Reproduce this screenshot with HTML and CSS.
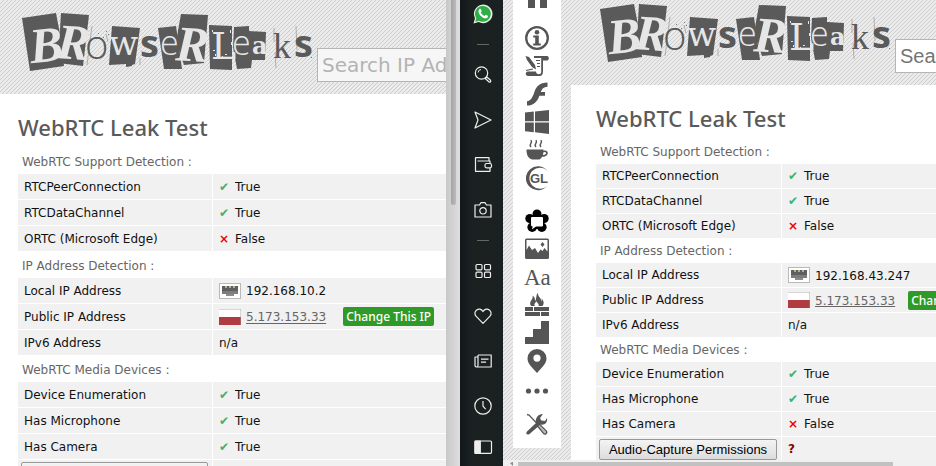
FILE: index.html
```html
<!DOCTYPE html>
<html lang="en">
<head>
<meta charset="utf-8">
<title>WebRTC Leak Test</title>
<link rel="stylesheet" href="styles.css">
</head>
<body>
<svg class="defs" width="0" height="0" aria-hidden="true">
  <defs>
    <symbol id="logo" viewBox="0 0 292 62">
      <g fill="#5a5a5a">
        <path d="M0 6 34 1 38 22 42 54 8 59Z"/>
        <path d="M39 1 67 3 61 54 36 51Z"/>
        <path d="M90 14 118 16 113 52 110 53 110 54 104 55 104 52 87 53Z"/>
        <path d="M136 16 154 14 160 57 142 57Z"/>
        <path d="M159 2 186 3 182 51 162 53 154 30Z"/>
        <path d="M187 13 210 14 210 58 188 57Z"/>
        <path d="M212 15 227 14 227 19 244 20 243 48 230 48 229 56 215 57 211 35Z"/>
      </g>
      <g stroke="#8a8a8a" stroke-width="0.6" fill="none">
        <path d="M70 14 65 53M84 22 86 30M118 46v7M252 16v14M253 40l1 16M274 14l1 24"/>
      </g>
      <g fill="#777"><path d="M76 21h1v1h-1zM84 19h1v1h-1zM86 22h1v1h-1zM81 25h1v1h-1zM289 45h1v1h-1z"/></g>
      <g fill="#e6e6e6">
        <path d="M191 38h2v1h-2zM193 42h1v2h-1zM203 42h2v1h-2zM206 46h2v1h-2zM190 18h1v2h-1zM208 18h1v3h-1zM209 30h1v3h-1zM200 44h1v1h-1z"/>
        <text class="lg-gothic" x="7" y="50" transform="rotate(-6 20 30)">B</text>
        <text class="lg-gothic" x="35" y="47" transform="rotate(4 48 30)">R</text>
        <text class="lg-type" x="87" y="43">w</text>
        <text class="lg-light" x="138" y="43">e</text>
        <text class="lg-gothic" x="154" y="49" transform="rotate(3 170 30)">R</text>
        <text class="lg-slab" x="189" y="47">L</text>
        <text class="lg-light" x="210" y="43">e</text>
        <text class="lg-a" x="230" y="42">a</text>
      </g>
      <g fill="#5a5a5a">
        <text class="lg-round" x="63" y="47">o</text>
        <text class="lg-bold" x="118" y="45">s</text>
        <text class="lg-k" x="251" y="46">k</text>
        <text class="lg-bold" x="272" y="45">s</text>
      </g>
    </symbol>
    <symbol id="lan" viewBox="0 0 22 16">
      <rect x=".5" y=".5" width="21" height="15" fill="#fff" stroke="#b9b9b9"/>
      <path d="M3 3h16v5H3z" fill="#5f5f5f"/>
      <path d="M3 8h16v3H3z" fill="#7d7d7d"/>
      <path d="M7 11h8v2H7z" fill="#8c8c8c"/>
      <path d="M6 3h2v2H6zM10 3h2v2h-2zM14 3h2v2h-2z" fill="#b5ae90"/>
    </symbol>
    <symbol id="flag" viewBox="0 0 22 16">
      <path d="M0 0h22v8H0z" fill="#fff"/>
      <path d="M0 8h22v8H0z" fill="#b03c42"/>
      <path d="M0 .5h22M21.500 0v16" fill="none" stroke="#999" stroke-opacity=".4"/>
    </symbol>
  </defs>
</svg>

<div class="desk">
  <section class="page page-a" aria-label="First window">
    <header class="masthead">
      <svg class="logo" role="img" aria-label="BrowserLeaks"><use href="#logo"/></svg>
      <input class="search" type="text" aria-label="Search IP Address" placeholder="Search IP Address">
    </header>
    <main class="content">
      <h1>WebRTC Leak Test</h1>
      <table>
        <colgroup><col class="name"><col></colgroup>
        <tr class="group"><th colspan="2">WebRTC Support Detection :</th></tr>
        <tr><td>RTCPeerConnection</td><td><i class="yes">✔</i>True</td></tr>
        <tr><td>RTCDataChannel</td><td><i class="yes">✔</i>True</td></tr>
        <tr><td>ORTC (Microsoft Edge)</td><td><i class="no">×</i>False</td></tr>
        <tr class="group"><th colspan="2">IP Address Detection :</th></tr>
        <tr><td>Local IP Address</td><td><svg class="mark"><use href="#lan"/></svg><span class="ip">192.168.10.2</span></td></tr>
        <tr><td>Public IP Address</td><td><svg class="mark"><use href="#flag"/></svg><a class="ip" href="#">5.173.153.33</a><button class="change" type="button">Change This IP</button></td></tr>
        <tr><td>IPv6 Address</td><td>n/a</td></tr>
        <tr class="group"><th colspan="2">WebRTC Media Devices :</th></tr>
        <tr><td>Device Enumeration</td><td><i class="yes">✔</i>True</td></tr>
        <tr><td>Has Microphone</td><td><i class="yes">✔</i>True</td></tr>
        <tr><td>Has Camera</td><td><i class="yes">✔</i>True</td></tr>
        <tr><td class="action"><button class="permit" type="button" aria-label="Audio-Capture Permissions"></button></td><td></td></tr>
      </table>
    </main>
  </section>

  <div class="scroll-y"><div class="thumb-y"></div></div>

  <nav class="dock" aria-label="Browser sidebar">
    <a href="#" aria-label="WhatsApp"><svg width="20" height="20" viewBox="0 0 20 20"><path d="M.5 19.500 2 14.300A9.300 9.300 0 1 1 5.600 18Z" fill="#e9eee9"/><path d="M2.300 17.700 3.300 14.200A7.900 7.900 0 1 1 6 16.700Z" fill="#2fae48"/><path d="M6.300 5.200c.8-.7 1.400-.5 1.700.2l.6 1.500c.2.600-.7 1.200-.8 1.600.8 1.700 2 2.700 3.600 3.400.500-.1 1-1.300 1.600-1.100l1.700.9c.6.300.3 1.600-.4 2.100-1.700 1.200-4 .2-5.900-1.400C6.400 10.700 4.400 7.500 6.300 5.200Z" fill="#fff"/></svg></a>
    <span class="rule"></span>
    <a href="#" aria-label="Search"><svg class="line" width="20" height="20" viewBox="0 0 20 20"><circle cx="8.500" cy="8" r="6.200"/><path d="M5 7.500A3.500 3.500 0 0 1 8 4.500" stroke-width="1"/><path d="m12.200 13.500 1.600-1.500 3.500 3c1.300 1.400-.3 2.800-1.500 1.700Z"/></svg></a>
    <a href="#" aria-label="Flow"><svg class="line" width="20" height="20" viewBox="0 0 20 20"><path d="M2 2 18 10 2 18 5 10Z"/></svg></a>
    <a href="#" aria-label="Wallet"><svg class="line" width="20" height="20" viewBox="0 0 20 20"><path d="M16 6V2.700H2.500V16.300H17V13M17 8.500V6H4.500"/><rect x="12" y="8.500" width="6.500" height="4.300" rx="1.500"/></svg></a>
    <a href="#" aria-label="Snapshot"><svg class="line" width="20" height="20" viewBox="0 0 20 20"><path d="M2 5h4.500l1.400-2.300h4.200L13.500 5H18v12H2Z"/><circle cx="10" cy="10.800" r="3.200"/></svg></a>
    <span class="rule"></span>
    <a href="#" aria-label="Speed Dial"><svg class="line" width="20" height="20" viewBox="0 0 20 20"><rect x="3" y="3.500" width="6" height="5.300" rx="1"/><rect x="11.500" y="3.500" width="6" height="5.300" rx="1"/><rect x="3" y="11.200" width="6" height="5.300" rx="1"/><rect x="11.500" y="11.200" width="6" height="5.300" rx="1"/></svg></a>
    <a href="#" aria-label="Bookmarks"><svg class="line" width="20" height="20" viewBox="0 0 20 20"><path d="M10 17.300 3 10.200C-.8 5.500 6.300-.3 10 5.500 13.700-.3 20.800 5.500 17 10.200Z"/></svg></a>
    <a href="#" aria-label="News"><svg class="line" width="20" height="20" viewBox="0 0 20 20"><path d="M5 4h13.200v12H3.300A1.500 1.500 0 0 1 2 14.500V6h3M5 4v10.500A1.500 1.500 0 0 1 3.500 16M8 8.200h7.500M8 11.200h5"/></svg></a>
    <a href="#" aria-label="History"><svg class="line" width="20" height="20" viewBox="0 0 20 20"><circle cx="10" cy="10" r="8.200"/><path d="M10 5v5.200l2.600 2.900"/></svg></a>
    <a href="#" aria-label="Panels" class="last"><svg class="line" width="20" height="20" viewBox="0 0 20 20"><rect x="2" y="4" width="16.500" height="12.300" rx="1"/><path d="M2 4h5.300v12.300H2z" fill="#eee"/></svg></a>
  </nav>

  <section class="page page-b" aria-label="Second window">
    <div class="viewport">
      <nav class="tools" aria-label="Tests">
        <a href="#" aria-label="Home" class="t-home"><svg viewBox="0 0 24 24"><path d="M3 0h7v22H3zM15 0h7v22h-7z"/></svg></a>
        <a href="#" aria-label="IP info"><svg viewBox="0 0 24 24"><circle cx="12" cy="12" r="10.800" fill="none" stroke="#555" stroke-width="2.300"/><circle cx="12" cy="6.300" r="2.300"/><path d="M8.200 9.500h5.600v8h2v2H8.200v-2h2v-6h-2z"/></svg></a>
        <a href="#" aria-label="JavaScript"><svg viewBox="0 0 24 24"><path d="M9 2h13c2.500 0 2.500 4.500 0 4.500h-4V17c0 4-1.500 5-3.500 5H3c-3 0-3-4.500 0-4.500h8c0 3.500 5.200 3.500 5.200.5V4H9z"/><path d="M.5 2 4 3l6 8 1 4.500L7 13 2 6z"/><path d="M11 6.500h4M12 9.500h3M12 12.500h3M1 16.500l7-1.500" stroke="#555" stroke-width="1.200"/></svg></a>
        <a href="#" aria-label="Flash"><svg viewBox="0 0 24 24"><path d="M22.500.5v4.300c-4 .2-5.500 2.200-6.700 5.200H20v3.700h-5.600C12.200 20 8.500 23.500 2 23.500v-4.300c4-.4 5.600-4.200 7.200-8.700C11.300 4.200 14.800.5 22.500.5Z"/></svg></a>
        <a href="#" aria-label="Silverlight"><svg viewBox="0 0 24 24"><path d="M0 2.500 8.800 1.600v9.700H0zM10 1.500 24 0v11.300H10zM0 12.600h8.800v9.600L0 21.200zM10 12.600h14V24l-14-1.700z"/></svg></a>
        <a href="#" aria-label="Java"><svg viewBox="0 0 24 24"><path d="M1.500 11.500h17v1.200c6-1.500 5.800 6.700-1.300 6.100-.8 1.300-1.600 2-2.700 2.700H7C2.500 20 1.500 16 1.500 11.500Zm17 2.700-.6 2.800c4.200.1 4.200-3.600.6-2.800Z"/><path d="M6 9c-3-3 2.200-3.500 0-7M11 9c-3-3 2.200-3.500 0-7M16 9c-3-3 2.200-3.500 0-7" fill="none" stroke="#555" stroke-width="1.400"/></svg></a>
        <a href="#" aria-label="WebGL"><svg viewBox="0 0 24 24"><path d="M22.500 5A12 12 0 1 0 22.500 19.500 10.500 10.500 0 1 1 22.500 5Z"/><text class="gl" x="5" y="17">GL</text></svg></a>
        <a href="#" aria-label="WebRTC" class="t-rtc"><svg viewBox="0 0 24 24"><g fill="#000"><circle cx="12" cy="5" r="4.500"/><circle cx="4.800" cy="9.500" r="4.500"/><circle cx="19.200" cy="9.500" r="4.500"/><circle cx="7.200" cy="18.200" r="4.800"/><circle cx="16.800" cy="18.200" r="4.800"/><path d="M5 8h14v12H5z"/></g><path d="M7 8h10q1 0 1 1v7.500q0 1-1 1h-6L6.800 20.500l1-3Q6 17.500 6 16V9q0-1 1-1Z" fill="#fff"/></svg></a>
        <a href="#" aria-label="Canvas"><svg viewBox="0 0 24 24"><path fill-rule="evenodd" d="M1.500 1.500h21A1.500 1.500 0 0 1 24 3v17.500a1.500 1.500 0 0 1-1.500 1.500h-21A1.500 1.500 0 0 1 0 20.500V3a1.500 1.500 0 0 1 1.500-1.500ZM1.500 3v10L4 8.500 7 13l3-2 3 5 2.500-3.500 2 1.500 2-3 3 3.500V3Z"/><path d="m17.500 5 2 2.500-2 2.500-2-2.500z"/></svg></a>
        <a href="#" aria-label="Fonts"><svg viewBox="0 0 24 24"><text class="aa" x="-1" y="20">Aa</text></svg></a>
        <a href="#" aria-label="Firewall"><svg viewBox="0 0 24 24"><path d="M6 13C3 8 9 7 7.500 2.500 10 4 10 6 10 8c2-2 .5-6 3-8-.5 4 4 5 3 8.500 1-1 .8-2 .5-3 3 3 2.500 5.500 1 7.500h-4c1-3-2-3-2-5-1 2-3 3-1.500 5Z"/><path d="M0 14h8v4H0zM9 14h15v4H9zM0 19h15v4H0zM16 19h8v4h-8z"/></svg></a>
        <a href="#" aria-label="Features"><svg viewBox="0 0 24 24"><path d="M16 0h8v23H0v-7h8V8h8z"/></svg></a>
        <a href="#" aria-label="Geolocation"><svg viewBox="0 0 24 24"><path fill-rule="evenodd" d="M12 0a9.500 9.500 0 0 1 9.500 9.500C21.500 15 16 19 12 24 8 19 2.500 15 2.500 9.500A9.500 9.500 0 0 1 12 0Zm0 5.500a3.600 3.600 0 1 0 0 7.200 3.600 3.600 0 0 0 0-7.200Z"/></svg></a>
        <a href="#" aria-label="More" class="t-more"><svg viewBox="0 0 24 24"><circle cx="3.500" cy="12" r="2.600"/><circle cx="12" cy="12" r="2.600"/><circle cx="20.500" cy="12" r="2.600"/></svg></a>
        <a href="#" aria-label="Tools" class="t-tools"><svg viewBox="0 0 24 24"><path d="m2 19.500 9-8.500C10 6 13 2 18 2l-3 4 1.300 2.500L20 9l2-3c1 5-3 7.500-6.500 6.500L4.500 22C2 23.500.2 21.500 2 19.500Z"/><path d="m2 2.500 2 .5 9 9.500" stroke="#555" stroke-width="1.300" fill="none"/><path d="m12.500 14 2-1.700 6.500 6.300c2 2.200-.8 4.500-2.500 2.800Z" fill="#bbb" stroke="#555" stroke-width="1.300"/></svg></a>
      </nav>
      <div class="sheet">
        <header class="masthead">
          <svg class="logo" role="img" aria-label="BrowserLeaks"><use href="#logo"/></svg>
          <input class="search" type="text" aria-label="Search" placeholder="Search IP Address">
        </header>
        <main class="content">
          <h1>WebRTC Leak Test</h1>
          <table>
            <colgroup><col class="name"><col></colgroup>
            <tr class="group"><th colspan="2">WebRTC Support Detection :</th></tr>
            <tr><td>RTCPeerConnection</td><td><i class="yes">✔</i>True</td></tr>
            <tr><td>RTCDataChannel</td><td><i class="yes">✔</i>True</td></tr>
            <tr><td>ORTC (Microsoft Edge)</td><td><i class="no">×</i>False</td></tr>
            <tr class="group"><th colspan="2">IP Address Detection :</th></tr>
            <tr><td>Local IP Address</td><td><svg class="mark"><use href="#lan"/></svg><span class="ip">192.168.43.247</span></td></tr>
            <tr><td>Public IP Address</td><td><svg class="mark"><use href="#flag"/></svg><a class="ip" href="#">5.173.153.33</a><button class="change" type="button">Change This IP</button></td></tr>
            <tr><td>IPv6 Address</td><td>n/a</td></tr>
            <tr class="group"><th colspan="2">WebRTC Media Devices :</th></tr>
            <tr><td>Device Enumeration</td><td><i class="yes">✔</i>True</td></tr>
            <tr><td>Has Microphone</td><td><i class="yes">✔</i>True</td></tr>
            <tr><td>Has Camera</td><td><i class="no">×</i>False</td></tr>
            <tr><td class="action"><button class="permit" type="button">Audio-Capture Permissions</button></td><td><i class="ask">?</i></td></tr>
          </table>
        </main>
      </div>
    </div>
    <div class="scroll-x"><svg class="arrow" viewBox="0 0 8 4"><path d="M7 0v4L4 1z"/></svg><div class="thumb-x"></div></div>
  </section>
</div>
</body>
</html>
```
FILE: styles.css
```css
* { box-sizing: border-box; }

body {
  margin: 0;
  overflow: hidden;
  font: 12px/16px "DejaVu Sans", sans-serif;
  color: #111;
  background: #fff;
}

.defs { display: none; }

.desk {
  display: grid;
  grid-template-columns: minmax(0, 446fr) 14px 43px minmax(0, 433fr);
  height: 100vh;
}

.page {
  display: flex;
  flex-direction: column;
  min-width: 0;
  overflow: hidden;
  background: linear-gradient(135deg, #ebebeb 42%, #cdcdcd 42% 58%, #ebebeb 58%) 0 0 / 4px 4px;
}

.masthead {
  display: flex;
  flex: none;
  gap: 3px;
  overflow: hidden;
}

.logo {
  flex: none;
  width: 292px;
  height: 62px;
}

.lg-gothic { font: italic bold 50px "Liberation Serif", serif; }
.lg-light { font: 300 34px "Open Sans", sans-serif; }
.lg-round { font: 300 40px "Open Sans", sans-serif; }
.lg-type { font: 34px "DejaVu Serif", serif; }
.lg-slab { font: 38px "DejaVu Serif", serif; }
.lg-a { font: bold 24px "DejaVu Serif", serif; }
.lg-k { font: 36px "Liberation Serif", serif; }
.lg-bold { font: bold 38px "Open Sans", sans-serif; }

.search {
  flex: none;
  width: 300px;
  height: 34px;
  padding: 0 4px;
  border: 1px solid #b5b5b5;
  border-radius: 0;
  font: 20px "DejaVu Sans", sans-serif;
  background: #f6f6f6;
}

.search::placeholder { color: #b3b3b3; opacity: 1; }

.content {
  flex: 1;
  overflow: hidden;
  background: #fff;
}

h1 {
  margin: 0;
  font: 500 22px/30px "Noto Sans", sans-serif;
  color: #5a5a5a;
  white-space: nowrap;
}

table {
  width: 100%;
  border-spacing: 0;
  table-layout: fixed;
  white-space: nowrap;
}

th {
  padding: 0 4px;
  text-align: left;
  font-weight: normal;
  color: #666;
}

td {
  padding: 0 6px;
  background: #f1f1f1;
  border-bottom: 1px solid #fff;
}

td:first-child { border-right: 1px solid #fff; }
td.action { padding: 0 3px; }

td i {
  display: inline-block;
  width: 16px;
  font-style: normal;
}

.yes { color: #3cb371; }
.no { color: #e00; font-weight: bold; }
.ask { color: #8b0000; font-weight: bold; }

.mark {
  width: 22px;
  height: 16px;
  margin-right: 5px;
  vertical-align: middle;
}

.ip { vertical-align: middle; }
a.ip { color: #666; text-underline-offset: 2px; }

.change {
  height: 19px;
  margin-left: 13px;
  padding: 0 3px;
  border: 0;
  border-radius: 2px;
  font: 500 12px/19px "Noto Sans", sans-serif;
  color: #fff;
  background: #2f9a27;
  vertical-align: middle;
}

.permit {
  display: block;
  height: 21px;
  width: 178px;
  padding: 0;
  border: 1px solid #999;
  border-radius: 2px;
  font: 13px/17px "Liberation Sans", sans-serif;
  color: #000;
  background: linear-gradient(#f4f4f4, #dcdcdc);
}

/* First window */
.page-a .masthead { height: 94px; padding-left: 22px; }
.page-a .logo { margin-top: 12px; }
.page-a .search { margin-top: 48px; }
.page-a .content { padding: 18px 0 0 18px; }
.page-a h1 { margin-bottom: 6px; }
.page-a .name { width: 195px; }
.page-a tr { height: 26px; }
.page-a th { padding-top: 1px; }
.page-a .change { margin-left: 17px; }
.page-a .permit { width: 187px; }

.scroll-y {
  display: flex;
  justify-content: center;
  background: linear-gradient(90deg, #c8c8c8, #dedede);
}

.thumb-y {
  width: 5px;
  height: 205px;
  border-radius: 0 0 3px 3px;
  background: linear-gradient(90deg, #a4a4a4, #bbb);
}

.dock {
  display: flex;
  flex-direction: column;
  align-items: center;
  gap: 25px;
  padding: 4px 0 0 2px;
  overflow: hidden;
  background: linear-gradient(90deg, #10171a, #1b2021 10px);
}

.dock a { flex: none; height: 20px; }
.dock .last { margin-top: -4px; }
.dock svg { display: block; }
.dock .line { fill: none; stroke: #eee; stroke-width: 1.2; stroke-linejoin: round; }
.dock .rule { flex: none; width: 12px; height: 1px; margin: -5px 0; background: #666; }

/* Second window */
.viewport { display: flex; flex: 1; min-height: 0; padding-left: 10px; }

.tools {
  flex: none;
  align-self: flex-start;
  display: flex;
  flex-direction: column;
  align-items: center;
  gap: 4px;
  width: 48px;
  margin-right: 10px;
  padding-bottom: 12px;
  background: #fff;
}

.tools a { height: 24px; }
.tools svg { display: block; width: 24px; height: 24px; overflow: visible; fill: #555; }
.tools .t-home { height: 22px; margin-top: -14px; margin-bottom: 14px; }
.tools .t-rtc { margin-top: 15px; }
.tools .t-more { margin-top: 2px; }
.tools .t-tools { margin-top: 5px; }
.gl { font: bold 13px "Liberation Sans", sans-serif; }
.aa { font: 23px "Liberation Serif", serif; }

.sheet { display: flex; flex: 1; flex-direction: column; min-width: 0; }
.page-b .masthead { height: 85px; padding-left: 29px; }
.page-b .logo { margin-top: 3px; }
.page-b .search {
  margin-top: 39px;
  font-family: "Liberation Sans", sans-serif;
  background: #fff;
}
.page-b .search::placeholder { color: #757575; }
.page-b .content { padding: 18px 0 0 25px; }
.page-b h1 { margin-bottom: 7px; }
.page-b .name { width: 186px; }
.page-b tr { height: 25px; }
.page-b .group { height: 24px; }

.scroll-x {
  display: flex;
  flex: none;
  height: 6px;
  padding: 2px 43px 0 3px;
  gap: 4px;
  background: #f0f0f0;
}

.arrow { flex: none; width: 8px; height: 4px; fill: #888; }
.thumb-x { flex: 1; background: #c1c1c1; }
```
